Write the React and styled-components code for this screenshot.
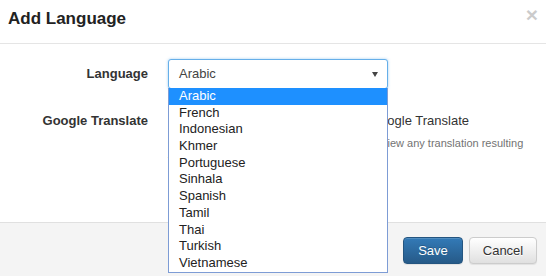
import React from "react";
import styled, { createGlobalStyle, css } from "styled-components";

const LANGUAGES = [
  "Arabic", "French", "Indonesian", "Khmer", "Portuguese", "Sinhala",
  "Spanish", "Tamil", "Thai", "Turkish", "Vietnamese",
];

const GlobalStyle = createGlobalStyle`
  html, body {
    margin: 0;
    padding: 0;
    background: #fff;
  }
  body {
    font-family: "Liberation Sans", Arial, sans-serif;
    font-size: 13px;
    color: #333;
  }
  * { box-sizing: border-box; }
`;

const App = () => {
  const selected = "Arabic";

  return (
    <>
      <GlobalStyle />
      <Modal>
        <Header>
          <Title>Add Language</Title>
          <CloseButton aria-label="Close">&times;</CloseButton>
        </Header>

        <Body>
          <FormRow>
            <FieldLabel>Language</FieldLabel>
            <SelectBox>
              <SelectValue>{selected}</SelectValue>
              <Caret />
              {/* open list of the select, drawn over the rest of the form */}
              <OptionList>
                {LANGUAGES.map((lang) => (
                  <Option key={lang} active={lang === selected}>{lang}</Option>
                ))}
              </OptionList>
            </SelectBox>
          </FormRow>

          <FormRow spaced>
            <FieldLabel tall>Google Translate</FieldLabel>
            <div>
              <CheckLine>
                <CheckInput type="checkbox" />
                Translate all new strings using Google Translate
              </CheckLine>
              <HelpText>
                Google translation is not exact, so please review any translation resulting from Google Translate.
              </HelpText>
            </div>
          </FormRow>
        </Body>

        <Footer>
          <Button primary width={60}>Save</Button>
          <Button width={68}>Cancel</Button>
        </Footer>
      </Modal>
    </>
  );
};

const Modal = styled.div`
  width: 546px;
  height: 276px;
  display: flex;
  flex-direction: column;
  background: #fff;
  overflow: hidden;
`;

const Header = styled.div`
  height: 44px;
  padding: 0 8px;
  display: flex;
  align-items: flex-start;
  justify-content: space-between;
  border-bottom: 1px solid #e5e5e5;
`;

const Title = styled.h4`
  margin: 9px 0 0;
  font-size: 17px;
  font-weight: bold;
  line-height: normal;
  color: #222;
`;

const CloseButton = styled.button`
  margin-top: 4px;
  padding: 0;
  border: none;
  background: transparent;
  font-family: "Liberation Sans", Arial, sans-serif;
  font-size: 21px;
  font-weight: bold;
  line-height: 1;
  color: #000;
  opacity: 0.2;
  cursor: pointer;
`;

const Body = styled.div`
  flex: 1;
  padding: 15px 15px 0 0;
`;

const FormRow = styled.div`
  display: grid;
  grid-template-columns: 148px 1fr;
  column-gap: 20px;
  align-items: center;

  ${(props) => props.spaced && css`
    margin-top: 22px;
    align-items: start;
  `}
`;

const FieldLabel = styled.label`
  text-align: right;
  font-weight: bold;
  color: #333;
  line-height: ${(props) => (props.tall ? "20px" : "30px")};
`;

const SelectBox = styled.div`
  position: relative;
  width: 220px;
  height: 30px;
  border: 1px solid #66afe9;
  border-radius: 3px;
  box-shadow: 0 0 3px rgba(102, 175, 233, 0.6);
  background: #fff;
  display: flex;
  align-items: center;
  padding: 0 9px 0 10px;
`;

const SelectValue = styled.span`
  flex: 1;
  color: #444;
  line-height: 28px;
`;

const Caret = styled.span`
  width: 0;
  height: 0;
  border-left: 3.5px solid transparent;
  border-right: 3.5px solid transparent;
  border-top: 5px solid #444;
`;

const OptionList = styled.ul`
  position: absolute;
  top: 100%;
  left: -1px;
  width: 220px;
  margin: 0;
  padding: 0;
  list-style: none;
  background: #fff;
  border: 1px solid #7d9cd5;
  border-top: none;
  z-index: 10;
`;

const Option = styled.li`
  height: 16.7px;
  line-height: 16.7px;
  padding-left: 10px;
  color: #222;
  background: ${(props) => (props.active ? "#1e90ff" : "transparent")};
  ${(props) => props.active && css`
    color: #fff;
  `}
`;

const CheckLine = styled.label`
  display: flex;
  align-items: center;
  gap: 11px;
  line-height: 20px;
  white-space: nowrap;
`;

const CheckInput = styled.input`
  width: 13px;
  height: 13px;
  margin: 0;
`;

const HelpText = styled.p`
  margin: 4px 0 0;
  font-size: 11px;
  line-height: 16px;
  color: #737373;
`;

const Footer = styled.div`
  height: 54px;
  padding: 14px 9px 0;
  display: flex;
  justify-content: flex-end;
  align-items: flex-start;
  gap: 6px;
  background: #f4f4f4;
  border-top: 1px solid #e0e0e0;
`;

const Button = styled.button`
  width: ${(props) => props.width}px;
  height: 27px;
  padding: 0;
  border-radius: 4px;
  font-family: "Liberation Sans", Arial, sans-serif;
  font-size: 13px;
  cursor: pointer;
  color: #333;
  border: 1px solid #ccc;
  background-image: linear-gradient(to bottom, #fff 0%, #e0e0e0 100%);
  text-shadow: 0 1px 0 #fff;
  box-shadow: inset 0 1px 0 rgba(255, 255, 255, 0.15), 0 1px 1px rgba(0, 0, 0, 0.075);

  ${(props) => props.primary && css`
    color: #fff;
    border-color: #245580;
    background-image: linear-gradient(to bottom, #337ab7 0%, #265a88 100%);
    text-shadow: 0 -1px 0 rgba(0, 0, 0, 0.2);
  `}
`;

export default App;
